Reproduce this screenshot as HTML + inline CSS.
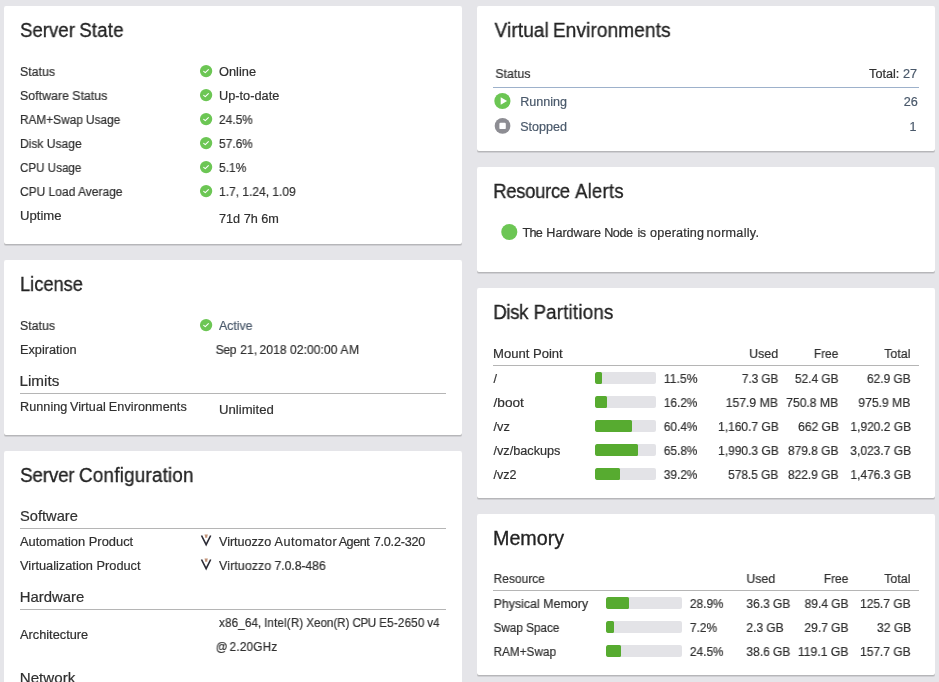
<!DOCTYPE html>
<html lang="en">
<head>
<meta charset="utf-8">
<title>Hardware Node Summary</title>
<style>
html,body{margin:0;padding:0}
body{width:939px;height:682px;overflow:hidden;position:relative;background:#e5e5e9;font-family:"Liberation Sans",sans-serif;color:#303030}
.card{position:absolute;background:#fff;border-radius:2px;box-shadow:0 1px 0 #b6b6b9,0 2px 0 #cfcfd3}
.t{position:absolute;white-space:nowrap;margin:0;font-weight:normal;transform-origin:0 50%;will-change:transform}
.ra{transform-origin:100% 50%}
.b{font-size:12.5px;line-height:16px;-webkit-text-stroke:0.2px currentColor}
.h{font-size:19.5px;line-height:24px;color:#222;-webkit-text-stroke:0.3px currentColor}
.s{font-size:14.5px;line-height:18px;-webkit-text-stroke:0.2px currentColor}
.hr{position:absolute;height:1px;background:#b5b5b5}
.ic{position:absolute;display:block}
.bar{position:absolute;height:12px;background:#e3e3e7;border-radius:2px;overflow:hidden}
.bar i{display:block;height:12px;background:#57ab30;border-radius:1.5px}
</style>
</head>
<body>
<section class="card" style="left:4px;top:6px;width:458px;height:238px">
<h2 class="t h" style="top:12px;left:16px;transform:scaleX(0.9561)">Server <span style="margin-left:-0.99px;letter-spacing:0.222px">State</span></h2>
<svg class="ic" style="left:195px;top:58px" width="15" height="15" viewBox="0 0 15 15"><circle cx="7.1" cy="7.05" r="6.15" fill="#6cc654"/><path d="M4.7 7.3 L6.3 8.7 L9.4 5.6" fill="none" stroke="#fff" stroke-width="1.05" stroke-linecap="round" stroke-linejoin="round"/></svg>
<span class="t b" style="top:58px;left:16px;transform:scaleX(0.9872)">Status</span>
<span class="t b" style="top:58px;left:215px;transform:scaleX(1.0252)">Online</span>
<svg class="ic" style="left:195px;top:82px" width="15" height="15" viewBox="0 0 15 15"><circle cx="7.1" cy="7.05" r="6.15" fill="#6cc654"/><path d="M4.7 7.3 L6.3 8.7 L9.4 5.6" fill="none" stroke="#fff" stroke-width="1.05" stroke-linecap="round" stroke-linejoin="round"/></svg>
<span class="t b" style="top:82px;left:16px;transform:scaleX(0.9903)">Software Status</span>
<span class="t b" style="top:82px;left:215px;transform:scaleX(1.0205)">Up-to-date</span>
<svg class="ic" style="left:195px;top:106px" width="15" height="15" viewBox="0 0 15 15"><circle cx="7.1" cy="7.05" r="6.15" fill="#6cc654"/><path d="M4.7 7.3 L6.3 8.7 L9.4 5.6" fill="none" stroke="#fff" stroke-width="1.05" stroke-linecap="round" stroke-linejoin="round"/></svg>
<span class="t b" style="top:106px;left:16px;transform:scaleX(0.9464)">RAM+Swap Usage</span>
<span class="t b" style="top:106px;left:215px;transform:scaleX(0.9529)">24.5%</span>
<svg class="ic" style="left:195px;top:130px" width="15" height="15" viewBox="0 0 15 15"><circle cx="7.1" cy="7.05" r="6.15" fill="#6cc654"/><path d="M4.7 7.3 L6.3 8.7 L9.4 5.6" fill="none" stroke="#fff" stroke-width="1.05" stroke-linecap="round" stroke-linejoin="round"/></svg>
<span class="t b" style="top:130px;left:16px;transform:scaleX(0.9654)">Disk Usage</span>
<span class="t b" style="top:130px;left:215px;transform:scaleX(0.9529)">57.6%</span>
<svg class="ic" style="left:195px;top:154px" width="15" height="15" viewBox="0 0 15 15"><circle cx="7.1" cy="7.05" r="6.15" fill="#6cc654"/><path d="M4.7 7.3 L6.3 8.7 L9.4 5.6" fill="none" stroke="#fff" stroke-width="1.05" stroke-linecap="round" stroke-linejoin="round"/></svg>
<span class="t b" style="top:154px;left:16px;transform:scaleX(0.9290)">CPU Usage</span>
<span class="t b" style="top:154px;left:215px;transform:scaleX(0.9540)">5.1%</span>
<svg class="ic" style="left:195px;top:178px" width="15" height="15" viewBox="0 0 15 15"><circle cx="7.1" cy="7.05" r="6.15" fill="#6cc654"/><path d="M4.7 7.3 L6.3 8.7 L9.4 5.6" fill="none" stroke="#fff" stroke-width="1.05" stroke-linecap="round" stroke-linejoin="round"/></svg>
<span class="t b" style="top:178px;left:16px;transform:scaleX(0.9600)">CPU Load Average</span>
<span class="t b" style="top:178px;left:215px;transform:scaleX(0.9598)">1.7, 1.24, 1.09</span>
<span class="t b" style="top:202px;left:16px;transform:scaleX(1.0487)">Uptime</span>
<span class="t b" style="top:205px;left:215px;transform:scaleX(1.0128)">71d 7h 6m</span>
</section>
<section class="card" style="left:4px;top:260px;width:458px;height:175px">
<h2 class="t h" style="top:12px;left:16px;transform:scaleX(0.9369)">License</h2>
<svg class="ic" style="left:195px;top:58px" width="15" height="15" viewBox="0 0 15 15"><circle cx="7.1" cy="7.05" r="6.15" fill="#6cc654"/><path d="M4.7 7.3 L6.3 8.7 L9.4 5.6" fill="none" stroke="#fff" stroke-width="1.05" stroke-linecap="round" stroke-linejoin="round"/></svg>
<span class="t b" style="top:58px;left:16px;transform:scaleX(0.9872)">Status</span>
<span class="t b" style="top:58px;left:215px;color:#4a596b;transform:scaleX(0.9851)">Active</span>
<span class="t b" style="top:82px;left:16px;transform:scaleX(1.0183)">Expiration</span>
<span class="t b" style="top:82px;left:211px;transform:translateX(0.70px) scaleX(0.9681)"><span style="letter-spacing:-0.362px">Sep</span> <span style="margin-left:0.52px;letter-spacing:0.181px">21,</span> <span style="margin-left:-1.37px;letter-spacing:0.103px">2018</span> <span style="margin-left:-0.15px;letter-spacing:0.037px">02:00:00</span> <span style="margin-left:-0.40px;letter-spacing:0.671px">AM</span></span>
<h3 class="t s" style="top:112px;left:15px;transform:translateX(0.50px) scaleX(1.0521)">Limits</h3>
<div class="hr" style="left:16px;top:133px;width:426px"></div>
<span class="t b" style="top:139px;left:16px;transform:scaleX(1.0079)"><span style="letter-spacing:0.066px">Running</span> <span style="margin-left:-0.96px;letter-spacing:0.058px">Virtual</span> <span style="margin-left:-0.50px;letter-spacing:0.072px">Environments</span></span>
<span class="t b" style="top:142px;left:215px;transform:scaleX(1.0517)">Unlimited</span>
</section>
<section class="card" style="left:4px;top:451px;width:458px;height:260px">
<h2 class="t h" style="top:12px;left:16px;transform:scaleX(0.9701)"><span style="letter-spacing:-0.237px">Server</span> <span style="margin-left:-0.59px;letter-spacing:0.168px">Configuration</span></h2>
<h3 class="t s" style="top:56px;left:16px;transform:scaleX(1.0116)">Software</h3>
<div class="hr" style="left:16px;top:77px;width:426px"></div>
<svg class="ic" style="left:196px;top:83px" width="12" height="13" viewBox="0 0 12 13"><path d="M1.5 1.5 L6.15 10.7 L10.7 1.5" fill="none" stroke="#2c2c36" stroke-width="1.6" stroke-linejoin="miter"/><path d="M4.6 0.5h3.2v1.1h-0.5v2.2h-2.2v-2.2h-0.5z" fill="#bf9075"/></svg>
<span class="t b" style="top:83px;left:16px;transform:scaleX(1.0310)">Automation Product</span>
<span class="t b" style="top:83px;left:215px;transform:scaleX(1.0096)"><span style="letter-spacing:-0.025px">Virtuozzo</span> <span style="margin-left:-0.12px;letter-spacing:0.489px">Automator</span> <span style="margin-left:-2.07px;letter-spacing:-0.483px">Agent</span> <span style="margin-left:0.98px;letter-spacing:-0.217px">7.0.2-320</span></span>
<svg class="ic" style="left:196px;top:107px" width="12" height="13" viewBox="0 0 12 13"><path d="M1.5 1.5 L6.15 10.7 L10.7 1.5" fill="none" stroke="#2c2c36" stroke-width="1.6" stroke-linejoin="miter"/><path d="M4.6 0.5h3.2v1.1h-0.5v2.2h-2.2v-2.2h-0.5z" fill="#bf9075"/></svg>
<span class="t b" style="top:107px;left:16px;transform:scaleX(1.0225)">Virtualization Product</span>
<span class="t b" style="top:107px;left:215px;transform:scaleX(0.9865)"><span style="letter-spacing:0.133px">Virtuozzo</span> <span style="margin-left:-0.34px;letter-spacing:-0.114px">7.0.8-486</span></span>
<h3 class="t s" style="top:137px;left:15px;transform:translateX(0.75px) scaleX(1.0254)">Hardware</h3>
<div class="hr" style="left:16px;top:158px;width:426px"></div>
<span class="t b" style="top:164px;left:215px;transform:scaleX(0.9337)"><span style="letter-spacing:0.143px">x86_64,</span> <span style="margin-left:-0.73px;letter-spacing:0.145px">Intel(R)</span> <span style="margin-left:-0.36px;letter-spacing:-0.071px">Xeon(R)</span> <span style="margin-left:-0.14px;letter-spacing:-0.562px">CPU</span> <span style="margin-left:0.46px;letter-spacing:0.179px">E5-2650</span> <span style="margin-left:-0.50px;letter-spacing:-0.054px">v4</span></span>
<span class="t b" style="top:176px;left:16px;transform:scaleX(1.0219)">Architecture</span>
<span class="t b" style="top:188px;left:211px;transform:translateX(0.70px) scaleX(0.9393)">@ <span style="margin-left:-1.38px;letter-spacing:0.222px">2.20GHz</span></span>
<h3 class="t s" style="top:218px;left:15px;transform:translateX(0.75px) scaleX(1.0433)">Network</h3>
</section>
<section class="card" style="left:477px;top:6px;width:458px;height:145px">
<h2 class="t h" style="top:12px;left:17px;transform:translateX(0.50px) scaleX(0.9813)"><span style="letter-spacing:0.076px">Virtual</span> <span style="margin-left:-1.35px;letter-spacing:0.060px">Environments</span></h2>
<span class="t b" style="top:60px;left:18px;transform:translateX(0.40px) scaleX(0.9900)">Status</span>
<span class="t b ra" style="top:60px;right:18px;transform:translateX(-0.25px) scaleX(1.0140)">Total: <span style="color:#4a596b">27</span></span>
<div class="hr" style="left:16px;top:81px;width:426px;background:#9db1cb"></div>
<svg class="ic" style="left:16px;top:86px" width="19" height="19" viewBox="0 0 19 19"><circle cx="9.4" cy="9" r="8.1" fill="#6cc654"/><path d="M7.7 5.25 L14.1 9.05 L7.7 12.85 Z" fill="#fff"/></svg>
<span class="t b" style="top:88px;left:43px;color:#4a596b;transform:translateX(0.20px) scaleX(1.0044)">Running</span>
<span class="t b ra" style="top:88px;right:17px;color:#4a596b;transform:scaleX(1.0117)">26</span>
<svg class="ic" style="left:16px;top:111px" width="19" height="19" viewBox="0 0 19 19"><circle cx="9.55" cy="8.9" r="7.85" fill="#8d8d93"/><rect x="6.4" y="5.7" width="6.4" height="6.4" rx="1.2" fill="#fff"/></svg>
<span class="t b" style="top:113px;left:43px;color:#4a596b;transform:translateX(0.20px) scaleX(1.0044)">Stopped</span>
<span class="t b ra" style="top:113px;right:18px;color:#4a596b;transform:translateX(-0.50px)">1</span>
</section>
<section class="card" style="left:477px;top:167px;width:458px;height:105px">
<h2 class="t h" style="top:12px;left:16px;transform:translateX(0.25px) scaleX(0.9461)"><span style="letter-spacing:-0.325px">Resource</span> <span style="margin-left:0.22px;letter-spacing:0.264px">Alerts</span></h2>
<svg class="ic" style="left:23px;top:56px" width="19" height="19" viewBox="0 0 19 19"><circle cx="9.3" cy="9" r="8.05" fill="#6cc654"/></svg>
<span class="t b" style="top:58px;left:45px;transform:translateX(0.40px) scaleX(1.0105)"><span style="letter-spacing:-0.668px">The</span> <span style="margin-left:0.62px;letter-spacing:-0.014px">Hardware</span> <span style="margin-left:-0.23px;letter-spacing:-0.495px">Node</span> <span style="margin-left:1.43px;letter-spacing:-0.445px">is</span> <span style="margin-left:0.94px;letter-spacing:0.161px">operating</span> <span style="margin-left:-1.15px;letter-spacing:0.247px">normally.</span></span>
</section>
<section class="card" style="left:477px;top:288px;width:458px;height:210px">
<h2 class="t h" style="top:12px;left:16px;transform:translateX(0.25px) scaleX(0.9645)"><span style="letter-spacing:-0.501px">Disk</span> <span style="margin-left:0.35px;letter-spacing:0.161px">Partitions</span></h2>
<span class="t b" style="top:58px;left:16px;transform:scaleX(1.0457)">Mount Point</span>
<span class="t b ra" style="top:58px;right:157px;transform:scaleX(0.9948)">Used</span>
<span class="t b ra" style="top:58px;right:96px;transform:translateX(-0.40px) scaleX(0.9522)">Free</span>
<span class="t b ra" style="top:58px;right:25px;transform:scaleX(0.9923)">Total</span>
<div class="hr" style="left:16px;top:77px;width:426px"></div>
<div class="bar" style="left:118px;top:84px;width:61px"><i style="width:6.6px"></i></div>
<span class="t b" style="top:83px;left:16px;transform:translateX(0.50px)">/</span>
<span class="t b" style="top:83px;left:186px;transform:translateX(0.80px) scaleX(0.9752)">11.5%</span>
<span class="t b ra" style="top:83px;right:156px;transform:translateX(-0.60px) scaleX(0.9362)">7.3 GB</span>
<span class="t b ra" style="top:83px;right:96px;transform:translateX(-0.40px) scaleX(0.9485)">52.4 GB</span>
<span class="t b ra" style="top:83px;right:24px;transform:translateX(-0.20px) scaleX(0.9539)">62.9 GB</span>
<div class="bar" style="left:118px;top:108px;width:61px"><i style="width:12.4px"></i></div>
<span class="t b" style="top:107px;left:16px;transform:translateX(0.50px) scaleX(1.0937)">/boot</span>
<span class="t b" style="top:107px;left:186px;transform:translateX(0.80px) scaleX(0.9475)">16.2%</span>
<span class="t b ra" style="top:107px;right:156px;transform:translateX(-0.60px) scaleX(0.9765)">157.9 MB</span>
<span class="t b ra" style="top:107px;right:96px;transform:translateX(-0.40px) scaleX(0.9710)">750.8 MB</span>
<span class="t b ra" style="top:107px;right:24px;transform:translateX(-0.20px) scaleX(0.9711)">975.9 MB</span>
<div class="bar" style="left:118px;top:132px;width:61px"><i style="width:36.9px"></i></div>
<span class="t b" style="top:131px;left:16px;transform:translateX(0.50px) scaleX(1.0195)">/vz</span>
<span class="t b" style="top:131px;left:186px;transform:translateX(0.80px) scaleX(0.9475)">60.4%</span>
<span class="t b ra" style="top:131px;right:156px;transform:translateX(-0.60px) scaleX(0.9582)">1,160.7 GB</span>
<span class="t b ra" style="top:131px;right:96px;transform:translateX(-0.40px) scaleX(0.9662)">662 GB</span>
<span class="t b ra" style="top:131px;right:24px;transform:translateX(-0.20px) scaleX(0.9589)">1,920.2 GB</span>
<div class="bar" style="left:118px;top:156px;width:61px"><i style="width:43px"></i></div>
<span class="t b" style="top:155px;left:16px;transform:translateX(0.50px) scaleX(1.0137)">/vz/backups</span>
<span class="t b" style="top:155px;left:186px;transform:translateX(0.80px) scaleX(0.9475)">65.8%</span>
<span class="t b ra" style="top:155px;right:156px;transform:translateX(-0.60px) scaleX(0.9582)">1,990.3 GB</span>
<span class="t b ra" style="top:155px;right:96px;transform:translateX(-0.40px) scaleX(0.9553)">879.8 GB</span>
<span class="t b ra" style="top:155px;right:24px;transform:translateX(-0.20px) scaleX(0.9608)">3,023.7 GB</span>
<div class="bar" style="left:118px;top:180px;width:61px"><i style="width:24.5px"></i></div>
<span class="t b" style="top:179px;left:16px;transform:translateX(0.50px)">/vz2</span>
<span class="t b" style="top:179px;left:186px;transform:translateX(0.80px) scaleX(0.9475)">39.2%</span>
<span class="t b ra" style="top:179px;right:156px;transform:translateX(-0.60px) scaleX(0.9478)">578.5 GB</span>
<span class="t b ra" style="top:179px;right:96px;transform:translateX(-0.40px) scaleX(0.9553)">822.9 GB</span>
<span class="t b ra" style="top:179px;right:24px;transform:translateX(-0.20px) scaleX(0.9589)">1,476.3 GB</span>
</section>
<section class="card" style="left:477px;top:514px;width:458px;height:161px">
<h2 class="t h" style="top:12px;left:16px;transform:scaleX(1.0102)">Memory</h2>
<span class="t b" style="top:57px;left:16px;transform:translateX(0.60px) scaleX(0.9575)">Resource</span>
<span class="t b" style="top:57px;left:269px;transform:translateX(0.40px) scaleX(0.9877)">Used</span>
<span class="t b ra" style="top:57px;right:86px;transform:translateX(-0.40px) scaleX(0.9542)">Free</span>
<span class="t b ra" style="top:57px;right:25px;transform:scaleX(0.9923)">Total</span>
<div class="hr" style="left:16px;top:76px;width:426px"></div>
<div class="bar" style="left:129px;top:83px;width:76px"><i style="width:23.4px"></i></div>
<span class="t b" style="top:82px;left:16px;transform:translateX(0.60px) scaleX(0.9921)">Physical Memory</span>
<span class="t b" style="top:82px;left:212px;transform:translateX(0.90px) scaleX(0.9487)">28.9%</span>
<span class="t b" style="top:82px;left:269px;transform:translateX(0.40px) scaleX(0.9570)">36.3 GB</span>
<span class="t b ra" style="top:82px;right:86px;transform:translateX(-0.40px) scaleX(0.9561)">89.4 GB</span>
<span class="t b ra" style="top:82px;right:24px;transform:translateX(-0.20px) scaleX(0.9577)">125.7 GB</span>
<div class="bar" style="left:129px;top:107px;width:76px"><i style="width:7.7px"></i></div>
<span class="t b" style="top:106px;left:16px;transform:translateX(0.60px) scaleX(0.9368)">Swap Space</span>
<span class="t b" style="top:106px;left:212px;transform:translateX(0.90px) scaleX(0.9484)">7.2%</span>
<span class="t b" style="top:106px;left:269px;transform:translateX(0.40px) scaleX(0.9583)">2.3 GB</span>
<span class="t b ra" style="top:106px;right:86px;transform:translateX(-0.40px) scaleX(0.9614)">29.7 GB</span>
<span class="t b ra" style="top:106px;right:24px;transform:translateX(-0.20px) scaleX(0.9682)">32 GB</span>
<div class="bar" style="left:129px;top:131px;width:76px"><i style="width:15.3px"></i></div>
<span class="t b" style="top:130px;left:16px;transform:translateX(0.60px) scaleX(0.9401)">RAM+Swap</span>
<span class="t b" style="top:130px;left:212px;transform:translateX(0.90px) scaleX(0.9487)">24.5%</span>
<span class="t b" style="top:130px;left:269px;transform:translateX(0.40px) scaleX(0.9570)">38.6 GB</span>
<span class="t b ra" style="top:130px;right:86px;transform:translateX(-0.40px) scaleX(0.9775)">119.1 GB</span>
<span class="t b ra" style="top:130px;right:24px;transform:translateX(-0.20px) scaleX(0.9577)">157.7 GB</span>
</section>
</body>
</html>
